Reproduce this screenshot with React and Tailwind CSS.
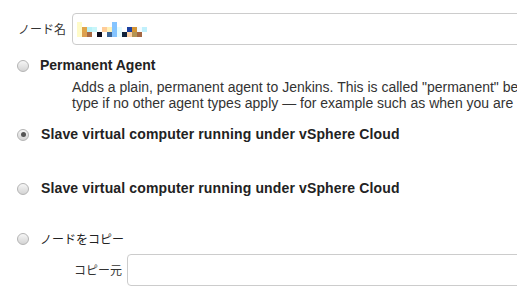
import React from "react";

// mosaic that hides the node name in the screenshot
const MOSAIC = [
    ["#fffbc8", "#fffbc8", "#fffbc8"],
    [null, "#e0a448", "#dca050"],
    [null, "#b8f2f8", "#a86a44"],
    [null, "#c8f6fa", null],
    [null, null, "#0c0c1c"],
    [null, "#ffcc98", null],
    [null, "#fff2b8", "#3c6494"],
    ["#84c4ff", "#84c4ff", "#84c4ff"],
    [null, "#e4fcff", "#e8fcff"],
    [null, null, "#10223a"],
    [null, "#1c40a0", "#ffd4a8"],
    [null, "#d49434", "#b49454"],
    [null, "#f4fcff", "#a46844"],
    [null, "#c0f0fc", null],
];

function Mosaic() {
    return (
        <div className="flex">
            {MOSAIC.map((col, i) => (
                <div key={i} className="flex flex-col">
                    {col.map((c, j) => (
                        <div key={j} className="w-[5px] h-[5px]" style={{ background: c || "transparent" }} />
                    ))}
                </div>
            ))}
        </div>
    );
}

function Radio({ checked }) {
    return (
        <span className="shrink-0 w-[12px] h-[12px] rounded-full border border-[#b4b4b4] bg-linear-to-b from-[#f6f6f6] to-[#d4d4d4] grid place-items-center">
            {checked && <span className="w-[5px] h-[5px] rounded-full bg-[#555]" />}
        </span>
    );
}

const jp = "font-['Noto_Sans_CJK_JP',sans-serif] whitespace-nowrap";

export default function App() {
    return (
        <div className="w-[517px] h-[297px] overflow-hidden bg-white text-[#333] font-['Liberation_Sans',Arial,sans-serif] text-[14px]">
            {/* node name */}
            <div className="flex items-center mt-[13px]">
                <label className={`shrink-0 w-[72px] pr-[6px] text-right text-[12px] text-[#333] ${jp}`}>ノード名</label>
                <div className="shrink-0 w-[480px] h-[32px] border border-[#ccc] rounded-[4px] flex items-center pl-[4px]">
                    <Mosaic />
                </div>
            </div>

            {/* agent types */}
            <div className="mt-[12px] flex items-center pl-[17px] h-[17px]">
                <Radio />
                <span className="ml-[11px] font-bold text-[#222] whitespace-nowrap">Permanent Agent</span>
            </div>
            <div className="pl-[72px] mt-[5px] leading-[16px] text-[#333] whitespace-nowrap">
                <div>Adds a plain, permanent agent to Jenkins. This is called "permanent" because it doesn't provide</div>
                <div>type if no other agent types apply — for example such as when you are adding a physical computer</div>
            </div>

            <div className="mt-[15px] flex items-center pl-[17px] h-[17px]">
                <Radio checked />
                <span className="ml-[12px] font-bold tracking-[0.14px] text-[#222] whitespace-nowrap">Slave virtual computer running under vSphere Cloud</span>
            </div>
            <div className="mt-[37px] flex items-center pl-[17px] h-[17px]">
                <Radio />
                <span className="ml-[12px] font-bold tracking-[0.14px] text-[#222] whitespace-nowrap">Slave virtual computer running under vSphere Cloud</span>
            </div>

            <div className="mt-[33px] flex items-center pl-[17px] h-[17px]">
                <Radio />
                <span className={`ml-[11px] text-[12px] text-[#222] ${jp}`}>ノードをコピー</span>
            </div>
            <div className="flex items-center mt-[7px]">
                <label className={`shrink-0 w-[127px] pr-[5px] text-right text-[12px] text-[#333] ${jp}`}>コピー元</label>
                <div className="shrink-0 w-[420px] h-[32px] border border-[#ccc] rounded-[4px]" />
            </div>
        </div>
    );
}
